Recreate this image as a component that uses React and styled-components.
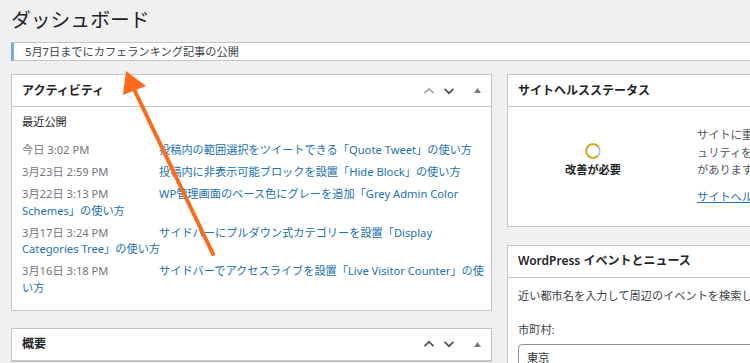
import React from 'react'
import styled, { createGlobalStyle } from 'styled-components'

const GlobalStyle = createGlobalStyle`
  body {
    margin: 0;
    background: #f0f0f1;
    overflow: hidden;
    font-family: "Noto Sans", "Noto Sans CJK JP", sans-serif;
    color: #3c434a;
  }
`

const Page = styled.div`
  position: relative;
  width: 1000px;
  height: 363px;
  padding-left: 11px;
  box-sizing: border-box;
`

const Title = styled.h1`
  margin: 7px 0 9px;
  font-size: 19.8px;
  font-weight: 400;
  line-height: 26px;
  color: #1d2327;
`

const Notice = styled.div`
  margin-bottom: 13px;
  height: 17px;
  padding-left: 11px;
  background: #fff;
  border: 1px solid #c3c4c7;
  border-left: 3px solid #72aee6;
  font-size: 11.2px;
  line-height: 17px;
  color: #3c434a;
`

const Columns = styled.div`
  display: flex;
  gap: 15px;
  align-items: flex-start;
`

const Column = styled.div`
  width: 481px;
  display: flex;
  flex-direction: column;
  gap: ${({ $gap }) => $gap}px;
`

const Postbox = styled.div`
  background: #fff;
  border: 1px solid #c3c4c7;
  box-sizing: border-box;
`

const Header = styled.div`
  display: flex;
  align-items: center;
  height: 31px;
  padding: 0 4px 0 10px;
  border-bottom: 1px solid #c3c4c7;
`

const BoxTitle = styled.h2`
  margin: 0;
  font-size: 12px;
  font-weight: 600;
  color: #1d2327;
  line-height: 16px;
`

const Handles = styled.div`
  margin-left: auto;
  display: flex;
  align-items: center;
`

const Handle = styled.span`
  width: 20px;
  height: 20px;
  display: flex;
  align-items: center;
  justify-content: center;
  margin-left: ${({ $space }) => $space || 0}px;
  color: ${({ $muted }) => ($muted ? '#a7aaad' : '#50575e')};
`

const Chevron = ({ down }) => (
  <svg width="12" height="8" viewBox="0 0 12 8">
    <path
      d={down ? 'M1.5 1.8 L6 6.2 L10.5 1.8' : 'M1.5 6.2 L6 1.8 L10.5 6.2'}
      fill="none"
      stroke="currentColor"
      strokeWidth="1.8"
    />
  </svg>
)

const BoxHandles = ({ first }) => (
  <Handles>
    <Handle $muted={first}>
      <Chevron />
    </Handle>
    <Handle>
      <Chevron down />
    </Handle>
    <Handle $space={8}>
      <svg width="7" height="5" viewBox="0 0 7 5">
        <path d="M0 5 L3.5 0 L7 5Z" fill="#787c82" />
      </svg>
    </Handle>
  </Handles>
)

const ActivityBody = styled.div`
  padding: 7px 0 8px 10px;
  font-size: 11.2px;
`

const SubHead = styled.h3`
  margin: 0 0 12px;
  font-size: 11.2px;
  font-weight: 400;
  line-height: 16px;
  color: #1d2327;
`

const PostList = styled.ul`
  margin: 0;
  padding: 0;
  list-style: none;
`

const PostItem = styled.li`
  margin-bottom: 5.5px;
  line-height: 16.5px;
`

const PostDate = styled.span`
  display: inline-block;
  width: 132px;
  margin-right: 5px;
  color: #72777c;
`

const Link = styled.a`
  color: #2271b1;
  text-decoration: ${({ $underline }) => ($underline ? 'underline' : 'none')};
`

const HealthBody = styled.div`
  display: grid;
  grid-template-columns: 170px 1fr;
  gap: 19px;
  padding: 19px 10px 20px 0;
  font-size: 11.2px;
`

const HealthStatus = styled.div`
  display: flex;
  flex-direction: column;
  align-items: center;
  margin-top: 17px;
`

const StatusLabel = styled.span`
  margin-top: 2.5px;
  font-weight: 600;
  line-height: 16px;
  color: #1d2327;
`

const HealthText = styled.p`
  margin: 0 0 9.5px;
  line-height: 17.5px;
  color: #50575e;
  white-space: nowrap;
`

const HealthLink = styled.div`
  line-height: 17.5px;
  white-space: nowrap;
`

const EventsBody = styled.div`
  padding: 10px 10px 0;
  font-size: 11.2px;
  color: #3c434a;
`

const Line = styled.p`
  margin: 0 0 ${({ $after }) => $after}px;
  line-height: 16.5px;
`

const CityInput = styled.div`
  height: 26px;
  width: 300px;
  padding: 0 8px;
  border: 1px solid #8c8f94;
  border-radius: 4px;
  line-height: 26px;
  color: #2c3338;
`

const Arrow = styled.svg`
  position: absolute;
  left: 0;
  top: 0;
  pointer-events: none;
`

const posts = [
  ['今日 3:02 PM', '投稿内の範囲選択をツイートできる「Quote Tweet」の使い方'],
  ['3月23日 2:59 PM', '投稿内に非表示可能ブロックを設置「Hide Block」の使い方'],
  ['3月22日 3:13 PM', 'WP管理画面のベース色にグレーを追加「Grey Admin Color Schemes」の使い方'],
  ['3月17日 3:24 PM', 'サイドバーにプルダウン式カテゴリーを設置「Display Categories Tree」の使い方'],
  ['3月16日 3:18 PM', 'サイドバーでアクセスライブを設置「Live Visitor Counter」の使い方'],
]

const App = () => (
  <Page>
    <GlobalStyle />
    <Title>ダッシュボード</Title>
    <Notice>5月7日までにカフェランキング記事の公開</Notice>
    <Columns>
      <Column $gap={17}>
        <Postbox>
          <Header>
            <BoxTitle>アクティビティ</BoxTitle>
            <BoxHandles first />
          </Header>
          <ActivityBody>
            <SubHead>最近公開</SubHead>
            <PostList>
              {posts.map(([date, title]) => (
                <PostItem key={date}>
                  <PostDate>{date}</PostDate>
                  <Link>{title}</Link>
                </PostItem>
              ))}
            </PostList>
          </ActivityBody>
        </Postbox>
        <Postbox>
          <Header>
            <BoxTitle>概要</BoxTitle>
            <BoxHandles />
          </Header>
        </Postbox>
      </Column>
      <Column $gap={18}>
        <Postbox>
          <Header>
            <BoxTitle>サイトヘルスステータス</BoxTitle>
          </Header>
          <HealthBody>
            <HealthStatus>
              <svg width="16" height="16" viewBox="0 0 16 16">
                <circle cx="8" cy="8" r="6.8" fill="none" stroke="#c3c4c7" strokeWidth="1.8" />
                <circle
                  cx="8"
                  cy="8"
                  r="6.8"
                  fill="none"
                  stroke="#dba617"
                  strokeWidth="1.8"
                  strokeDasharray="33 43"
                  transform="rotate(45 8 8)"
                />
              </svg>
              <StatusLabel>改善が必要</StatusLabel>
            </HealthStatus>
            <div>
              <HealthText>
                サイトに重大な問題はありませんが、パフォーマンスとセキ
                <br />
                ュリティを改善するために対処すべきこと
                <br />
                があります。
              </HealthText>
              <HealthLink>
                <Link $underline>サイトヘルス画面で詳細を確認してください。</Link>
              </HealthLink>
            </div>
          </HealthBody>
        </Postbox>
        <Postbox>
          <Header>
            <BoxTitle>WordPress イベントとニュース</BoxTitle>
          </Header>
          <EventsBody>
            <Line $after={17.5}>近い都市名を入力して周辺のイベントを検索しましょう。</Line>
            <Line $after={6}>市町村:</Line>
            <CityInput>東京</CityInput>
          </EventsBody>
        </Postbox>
      </Column>
    </Columns>
    <Arrow width="750" height="363" viewBox="0 0 750 363">
      <line x1="213" y1="247" x2="132" y2="78" stroke="#fd6a1b" strokeWidth="4" strokeLinecap="round" />
      <path d="M126 64 L146 79 L123 88 Z" fill="#fd6a1b" />
    </Arrow>
  </Page>
)

export default App
